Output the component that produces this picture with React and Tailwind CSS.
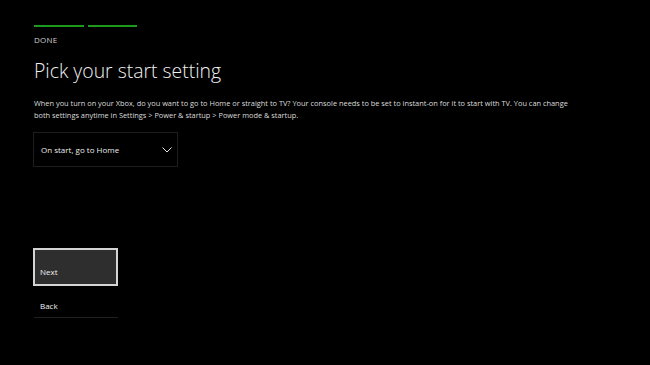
import React from 'react';

const ChevronDown = () => (
  <svg width="10" height="6" viewBox="0 0 10 6" fill="none">
    <path d="M0.5 0.5L5 5L9.5 0.5" stroke="#e5e5e5" strokeWidth="1" />
  </svg>
);

export default function App() {
  return (
    <div
      className="w-[650px] h-[365px] bg-black text-[#e6e6e6] overflow-hidden pl-[34px]"
      style={{ fontFamily: '"Open Sans", "Noto Sans", sans-serif' }}
    >
      {/* progress */}
      <div className="flex gap-[4px] pt-[25px]">
        <div className="w-[50px] h-[2px] bg-[#1b9a1b]" />
        <div className="w-[49px] h-[2px] bg-[#1b9a1b]" />
      </div>
      <div className="mt-[8px] text-[8px] leading-[10px] text-[#cfcfcf] tracking-[0.2px]">DONE</div>

      <h1 className="mt-[13px] text-[19.4px] leading-[26px] font-light text-[#f0f0f0]">
        Pick your start setting
      </h1>

      <p className="mt-[13px] w-[536px] text-[7.4px] leading-[12px] text-[#dcdcdc]">
        When you turn on your Xbox, do you want to go to Home or straight to TV? Your console needs to be set to instant-on for it to start with TV. You can change both settings anytime in Settings &gt; Power &amp; startup &gt; Power mode &amp; startup.
      </p>

      {/* dropdown */}
      <div className="-ml-[1px] mt-[11px] w-[145px] h-[35px] border border-[#1e1e1e] flex items-center justify-between pl-[7px] pr-[5px]">
        <span className="text-[8px] text-[#ececec]">On start, go to Home</span>
        <ChevronDown />
      </div>

      {/* buttons */}
      <div className="-ml-[1px] mt-[81px] w-[85px] h-[38px] border-2 border-[#d4d4d4] bg-[#2e2e2e] flex items-end pl-[5px] pb-[7px]">
        <span className="text-[8px] leading-[10px] text-[#f0f0f0]">Next</span>
      </div>
      <div className="w-[84px] h-[32px] border-b border-[#202020] flex items-center pl-[6px] pt-[9px]">
        <span className="text-[8px] leading-[10px] text-[#f0f0f0]">Back</span>
      </div>
    </div>
  );
}
